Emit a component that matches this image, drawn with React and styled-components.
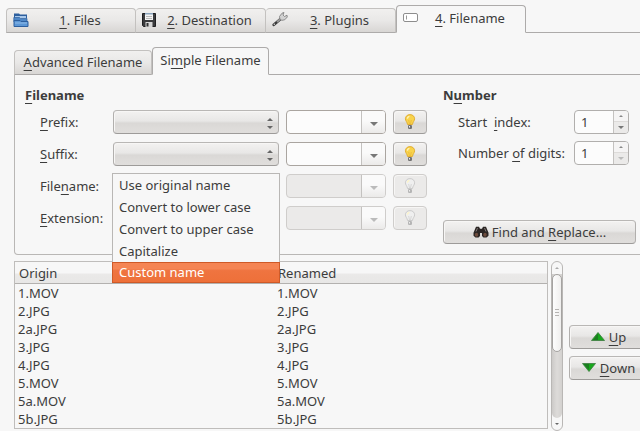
import React from 'react';
import styled, { createGlobalStyle, css } from 'styled-components';

const tabs = [
   { id: 'files', num: '1', title: 'Files' },
   { id: 'destination', num: '2', title: 'Destination' },
   { id: 'plugins', num: '3', title: 'Plugins' },
   { id: 'filename', num: '4', title: 'Filename' },
];

const fields = [
   { id: 'prefix', label: [null, 'P', 'refix:'] },
   { id: 'suffix', label: [null, 'S', 'uffix:'] },
   { id: 'name', label: ['File', 'n', 'ame:'], disabled: true, open: true },
   { id: 'extension', label: [null, 'E', 'xtension:'], disabled: true },
];

const options = [
   'Use original name',
   'Convert to lower case',
   'Convert to upper case',
   'Capitalize',
   'Custom name',
];

const files = [
   '1.MOV',
   '2.JPG',
   '2a.JPG',
   '3.JPG',
   '4.JPG',
   '5.MOV',
   '5a.MOV',
   '5b.JPG',
];

/* icons */

const FolderIcon = () => (
   <svg width="16" height="16" viewBox="0 0 16 16">
      <path d="M1 6V1.500h5l1 1h7V6z" fill="#2d5f9e" />
      <path d="M2 4h11v2H2z" fill="#a9c8ea" />
      <path d="M.8 5.500h5.700l1 1h6.500v3H.8z" fill="#4d86c6" stroke="#2d5f9e" strokeWidth="0.7" />
      <path d="M1 8.500h6l1 1h7v5H1z" fill="#5c97d6" stroke="#2d5f9e" />
      <path d="M2 11h12" stroke="#8fbbe8" />
   </svg>
);

const FloppyIcon = () => (
   <svg width="14" height="14" viewBox="0 0 14 14">
      <path d="M0.5 0.5h13v13h-12l-1-1z" fill="#3a3a3c" stroke="#1e1e20" />
      <path d="M3 0h8v7H3z" fill="#f3f3f3" />
      <path d="M3 0h8v1.5H3z" fill="#8aa4bd" />
      <path d="M4 3.5h6M4 5.5h6" stroke="#aaa" strokeWidth="0.8" />
      <path d="M3.5 9h7v5h-7z" fill="#d5d5d5" />
      <path d="M4.5 10h2v3.5h-2z" fill="#333" />
   </svg>
);

const WrenchIcon = () => (
   <svg width="16" height="15" viewBox="0 0 16 15">
      <path d="M1.800 12.800L8 7.500" stroke="#3c3c3c" strokeWidth="2.800" strokeLinecap="round" />
      <path d="M5 10l5-4.500" stroke="#999" strokeWidth="1.800" />
      <path
         d="M8 7.500L7.500 4.500 10 1.200l2-.7-1 2.500 1.500 1.500L15 3.200l.3 1.800-2.600 2.800-2.700.5z"
         fill="#d2d2d2"
         stroke="#777"
         strokeWidth="0.8"
      />
      <circle cx="2.300" cy="12.300" r="0.700" fill="#ddd" />
   </svg>
);

const EntryIcon = () => (
   <svg width="16" height="10" viewBox="0 0 16 10">
      <rect x="0.5" y="0.5" width="14" height="8" rx="1.5" fill="#fff" stroke="#8d8d8d" />
      <path d="M3.5 2.5v4" stroke="#999" />
   </svg>
);

const BulbIcon = ({ off }) => (
   <svg width="12" height="16" viewBox="0 0 12 16">
      <path
         d="M6 .6C3.200.6 1.400 2.500 1.400 4.800c0 2 1.600 3 2.200 5.700h4.800c.6-2.700 2.200-3.700 2.200-5.700C10.600 2.500 8.800.6 6 .6z"
         fill={off ? '#efefef' : '#f8d34c'}
         stroke={off ? '#c6c6c6' : '#dfa92c'}
         strokeWidth="0.9"
      />
      <path d="M3.400 4.600C3.500 3.200 4.300 2.500 5.400 2.300" stroke="#fff6c4" strokeWidth="1.3" fill="none" />
      <path d="M4.700 6l.8 4M7.300 6l-.8 4" stroke={off ? '#ccc' : '#e8b433'} strokeWidth="0.7" />
      <rect x="4" y="11" width="4" height="4" rx="1.2" fill={off ? '#b5b5b5' : '#737373'} />
      <rect x="5" y="12" width="1" height="1.5" fill="#eee" />
   </svg>
);

const BinocularsIcon = () => (
   <svg width="16" height="12" viewBox="0 0 16 12">
      <path d="M3 .8h3l1 2h2l1-2h3l2.500 6v3l-2 1.700h-3L9 10V7H7v3l-1.500 1.500h-3L.5 9.800v-3z" fill="#2b2523" />
      <ellipse cx="3.500" cy="8.800" rx="1.700" ry="2" fill="#6d4b3c" />
      <ellipse cx="12" cy="8.800" rx="1.700" ry="2" fill="#6d4b3c" />
      <path d="M4.500 2L3 5.500M11.500 2L13 5.500" stroke="#8b8583" strokeWidth="0.9" />
   </svg>
);

const Triangle = ({ down, size = 6, color = '#666' }) => (
   <svg width={size} height={size / 2} viewBox="0 0 6 3">
      <path d={down ? 'M0 0h6L3 3z' : 'M0 3h6L3 0z'} fill={color} />
   </svg>
);

const GreenArrow = ({ down }) => (
   <svg width="14" height="9" viewBox="0 0 14 9">
      <path d={down ? 'M.5.5h13L7 8.500z' : 'M.5 8.500h13L7 .5z'} fill="#17a81c" stroke="#3b7a3e" strokeWidth="0.8" />
      <path d={down ? 'M1.500 1H7v6z' : 'M2 8h5V1.500z'} fill="#1b7d20" />
   </svg>
);

const tabIcons = {
   files: <FolderIcon />,
   destination: <FloppyIcon />,
   plugins: <WrenchIcon />,
   filename: <EntryIcon />,
};

const App = () => {
   return (
      <Dialog>
         <GlobalStyle />

         <MainTabs role="tablist">
            {tabs.map(({ id, num, title }) => (
               <MainTab key={id} role="tab" $active={id === 'filename'}>
                  <TabIcon>{tabIcons[id]}</TabIcon>
                  <TabText>
                     <Key>{num}</Key>. {title}
                  </TabText>
               </MainTab>
            ))}
            <TabLine />
         </MainTabs>

         <Content>
            <SubTabs role="tablist">
               <SubTab role="tab">
                  <Key>A</Key>dvanced Filename
               </SubTab>
               <SubTab role="tab" $active>
                  Si<Key>m</Key>ple Filename
               </SubTab>
               <TabLine />
            </SubTabs>

            <Pane>
               <Group>
                  <Heading>
                     <Key>F</Key>ilename
                  </Heading>
                  <Fields>
                     {fields.map(field => (
                        <Field key={field.id} {...field} />
                     ))}
                  </Fields>
               </Group>

               <NumberGroup>
                  <Heading>
                     N<Key>u</Key>mber
                  </Heading>
                  <Numbers>
                     <label htmlFor="start">
                        Start &nbsp;<Key>i</Key>ndex:
                     </label>
                     <Spinner id="start" />
                     <label htmlFor="digits">
                        Number <Key>o</Key>f digits:
                     </label>
                     <Spinner id="digits" atEnd />
                  </Numbers>
                  <FindButton>
                     <BinocularsIcon />
                     <span>
                        Find and <Key>R</Key>eplace...
                     </span>
                  </FindButton>
               </NumberGroup>
            </Pane>

            <Bottom>
               <ListBox>
                  <Table>
                     <thead>
                        <tr>
                           <th>Origin</th>
                           <th>Renamed</th>
                        </tr>
                     </thead>
                     <tbody>
                        {files.map(file => (
                           <tr key={file}>
                              <td>{file}</td>
                              <td>{file}</td>
                           </tr>
                        ))}
                     </tbody>
                  </Table>
               </ListBox>

               <Scrollbar>
                  <ScrollButton aria-label="Scroll up">
                     <Triangle size={4} color="#aaa" />
                  </ScrollButton>
                  <Track>
                     <Thumb>
                        <i />
                        <i />
                        <i />
                     </Thumb>
                  </Track>
                  <ScrollButton aria-label="Scroll down">
                     <Triangle down size={4} />
                  </ScrollButton>
               </Scrollbar>

               <Actions>
                  <Button>
                     <GreenArrow />
                     <span>
                        <Key>U</Key>p
                     </span>
                  </Button>
                  <Button>
                     <GreenArrow down />
                     <span>
                        <Key>D</Key>own
                     </span>
                  </Button>
               </Actions>
            </Bottom>
         </Content>
      </Dialog>
   );
};

const Field = ({ id, label, disabled, open }) => {
   const [before, key, after] = label;

   return (
      <>
         <label htmlFor={id}>
            {before}
            <Key>{key}</Key>
            {after}
         </label>

         <SelectBox>
            <Select id={id} defaultValue="">
               <option value="" />
               {options.map(option => (
                  <option key={option}>{option}</option>
               ))}
            </Select>
            <SelectArrows>
               <Triangle />
               <Triangle down />
            </SelectArrows>
            {open && (
               <Menu role="listbox">
                  {options.map(option => (
                     <MenuItem
                        key={option}
                        role="option"
                        $selected={option === 'Custom name'}
                     >
                        {option}
                     </MenuItem>
                  ))}
               </Menu>
            )}
         </SelectBox>

         <Combo $disabled={disabled}>
            <input aria-label={`${id} text`} disabled={disabled} />
            <button aria-label={`${id} history`} disabled={disabled}>
               <Triangle down size={8} color={disabled ? '#bbb' : '#777'} />
            </button>
         </Combo>

         <Button aria-label={`${id} hints`} disabled={disabled}>
            <BulbIcon off={disabled} />
         </Button>
      </>
   );
};

const Spinner = ({ id, atEnd }) => (
   <SpinBox>
      <input id={id} defaultValue="1" />
      <SpinButtons>
         <button aria-label="Increase">
            <Triangle size={4} color="#888" />
         </button>
         <button aria-label="Decrease">
            <Triangle down size={6} color={atEnd ? '#bbb' : '#777'} />
         </button>
      </SpinButtons>
   </SpinBox>
);

export default App;

const GlobalStyle = createGlobalStyle`
   * {
      box-sizing: border-box;
   }

   body {
      margin: 0;
      overflow: hidden;
      background: #f7f7f7;
      color: #3c3c3c;
      font-family: 'Noto Sans', sans-serif;
      font-size: 13px;
      line-height: 20px;
   }

   button, input, select {
      margin: 0;
      padding: 0;
      font: inherit;
      color: inherit;
   }

   svg {
      display: block;
      flex-shrink: 0;
   }
`;

/* the dialog runs a little past the right edge of the window */
const Dialog = styled.main`
   display: flex;
   flex-direction: column;
   width: calc(100% + 8px);
   height: 100vh;
   padding-top: 5px;
`;

const Key = styled.span`
   text-decoration: underline;
   text-decoration-thickness: 1px;
   text-underline-offset: 3px;
`;

const tab = css`
   padding: 0 6px 2px;
   border: 1px solid #c3c1bf;
   border-bottom-color: #adabaa;
   border-radius: 4px 4px 0 0;
   background: linear-gradient(#f1f0ef, #e9e8e7 50%, #d8d6d4);

   & + & {
      border-left: 0;
   }
`;

const activeTab = css`
   border-color: #adabaa;
   border-bottom-color: #f7f7f7;
   background: #f7f7f7;
`;

const TabLine = styled.div`
   flex: 1;
   border-bottom: 1px solid #adabaa;
`;

const MainTabs = styled.div`
   display: flex;
   align-items: flex-end;
   padding-left: 6px;
`;

const MainTab = styled.button`
   ${tab}
   display: flex;
   align-items: center;
   width: 130px;
   height: 25px;

   ${props =>
      props.$active &&
      css`
         ${activeTab}
         height: 28px;
         border-left: 1px solid #adabaa !important;
      `}
`;

const TabIcon = styled.span`
   width: 16px;
`;

const TabText = styled.span`
   flex: 1;
   padding-left: 2px;
   text-align: center;
`;

const Content = styled.div`
   display: flex;
   flex: 1;
   flex-direction: column;
   min-height: 0;
   padding: 14px 0 0 14px;
`;

const SubTabs = styled.div`
   display: flex;
   align-items: flex-end;
`;

const SubTab = styled.button`
   ${tab}
   width: 138px;
   height: 25px;

   ${props =>
      props.$active &&
      css`
         ${activeTab}
         width: 117px;
         height: 28px;
         border-left: 1px solid #adabaa !important;
      `}
`;

const Pane = styled.section`
   display: flex;
   gap: 16px;
   padding: 10px 11px 10px 10px;
   border: solid #b9b7b5;
   border-width: 0 1px 1px;
   border-radius: 0 0 4px 4px;
`;

const Group = styled.div`
   padding-bottom: 14px;
`;

const NumberGroup = styled.div`
   display: flex;
   flex: 1;
   flex-direction: column;
`;

const Heading = styled.h2`
   margin: 0 0 5px;
   font-size: 13px;
   line-height: 20px;
`;

const Fields = styled.div`
   display: grid;
   grid-template-columns: 66px 166px 100px 34px;
   grid-auto-rows: 24px;
   column-gap: 7px;
   row-gap: 8px;
   align-items: center;
   padding-left: 15px;
`;

const raised = css`
   border: 1px solid #a5a3a1;
   border-color: #b9b7b5 #b1afad #9d9b99;
   border-radius: 4px;
   background: linear-gradient(#f3f2f1, #e8e7e6 45%, #dad8d6 55%, #e0dedc);
   box-shadow: inset 1px 1px #f7f6f5;
`;

const Button = styled.button`
   ${raised}
   display: flex;
   align-items: center;
   justify-content: center;
   gap: 4px;
   height: 24px;

   &:disabled {
      border-color: #cfcdcb;
      background: #ebeae9;
   }
`;

const SelectBox = styled.div`
   position: relative;
`;

const Select = styled.select`
   ${raised}
   display: block;
   appearance: none;
   width: 100%;
   height: 24px;
`;

const SelectArrows = styled.span`
   position: absolute;
   top: 8px;
   right: 6px;
   display: grid;
   gap: 5px;
   pointer-events: none;
`;

const Menu = styled.ul`
   position: absolute;
   top: -1px;
   left: -1px;
   right: -1px;
   z-index: 10;
   margin: 0;
   padding: 0;
   border: 1px solid #b9b7b5;
   background: #f7f7f7;
   list-style: none;
`;

const MenuItem = styled.li`
   height: 22px;
   padding-left: 6px;
   line-height: 22px;
   white-space: nowrap;

   ${props =>
      props.$selected &&
      css`
         height: 21px;
         margin: 0 -1px -1px;
         border: 1px solid #cf5a28;
         background: linear-gradient(#f58554, #f58554 30%, #ef7440 40%, #ee7039);
         color: #fff;
         line-height: 18px;
      `}
`;

const Combo = styled.div`
   display: flex;
   height: 24px;
   border: 1px solid #aaa5a0;
   border-radius: 4px;
   background: #fcfcfc;
   overflow: hidden;

   input {
      flex: 1;
      min-width: 0;
      padding: 0 4px;
      border: 0;
      background: transparent;
   }

   button {
      display: grid;
      place-items: center;
      width: 24px;
      padding-top: 3px;
      border: 0;
      border-left: 1px solid #c4c2c0;
      background: linear-gradient(#fafafa 45%, #ebeae9);
   }

   ${props =>
      props.$disabled &&
      css`
         border-color: #cfcdcb;
         background: #ebeae9;
      `}
`;

const Numbers = styled.div`
   display: grid;
   grid-template-columns: 116px 55px;
   grid-auto-rows: 24px;
   row-gap: 7px;
   align-items: center;
   padding-left: 15px;
   white-space: nowrap;
`;

const SpinBox = styled.div`
   display: flex;
   height: 24px;
   border: 1px solid #b1afad;
   border-radius: 4px;
   background: #fcfcfc;
   overflow: hidden;

   input {
      flex: 1;
      min-width: 0;
      padding: 0 6px;
      border: 0;
      background: transparent;
   }
`;

const SpinButtons = styled.div`
   display: grid;
   width: 15px;
   border-left: 1px solid #c4c2c0;

   button {
      display: grid;
      place-items: center;
      border: 0;
      background: #f5f4f4;
   }

   button + button {
      border-top: 1px solid #dddbd9;
      background: #ebeae9;
   }
`;

const FindButton = styled(Button)`
   margin-top: auto;
   gap: 3px;
`;

const Bottom = styled.div`
   display: flex;
   flex: 1;
   min-height: 0;
   padding-top: 6px;
`;

const ListBox = styled.div`
   flex: 1;
   margin: 0 3px 2px 0;
   border: 1px solid #bfbdbb;
   overflow: hidden;
`;

const Table = styled.table`
   width: 100%;
   border-collapse: separate;
   border-spacing: 0;
   table-layout: fixed;

   th,
   td {
      height: 18px;
      padding: 0 3px;
      line-height: 18px;
      text-align: left;
   }

   th {
      height: 22px;
      padding: 0 4px;
      border-bottom: 1px solid #b3b1af;
      background: linear-gradient(#f7f7f7 50%, #eae9e8 60%, #e8e7e6);
      font-weight: normal;
   }

   th:first-child {
      width: 259px;
   }
`;

const Scrollbar = styled.div`
   display: flex;
   flex-direction: column;
   width: 12px;
   border: 1px solid #b9b7b5;
   border-radius: 6px;
   background: #f7f7f7;
   overflow: hidden;
`;

const ScrollButton = styled.button`
   display: grid;
   place-items: center;
   height: 12px;
   border: 0;
   background: transparent;
`;

const Track = styled.div`
   flex: 1;
   border-radius: 0 0 6px 6px;
   background: linear-gradient(90deg, #cccac8, #dddbd9 50%, #d3d1cf);
`;

const Thumb = styled.div`
   display: flex;
   flex-direction: column;
   align-items: center;
   justify-content: center;
   gap: 2px;
   height: 54%;
   border: 1px solid #a5a3a1;
   border-radius: 6px;
   background: linear-gradient(90deg, #fdfdfd, #f0efee);

   i {
      width: 4px;
      height: 1px;
      background: #b5b3b1;
   }
`;

const Actions = styled.div`
   display: flex;
   flex-direction: column;
   justify-content: center;
   gap: 7px;
   width: 79px;
   margin-left: 6px;
   padding-top: 12px;
`;
